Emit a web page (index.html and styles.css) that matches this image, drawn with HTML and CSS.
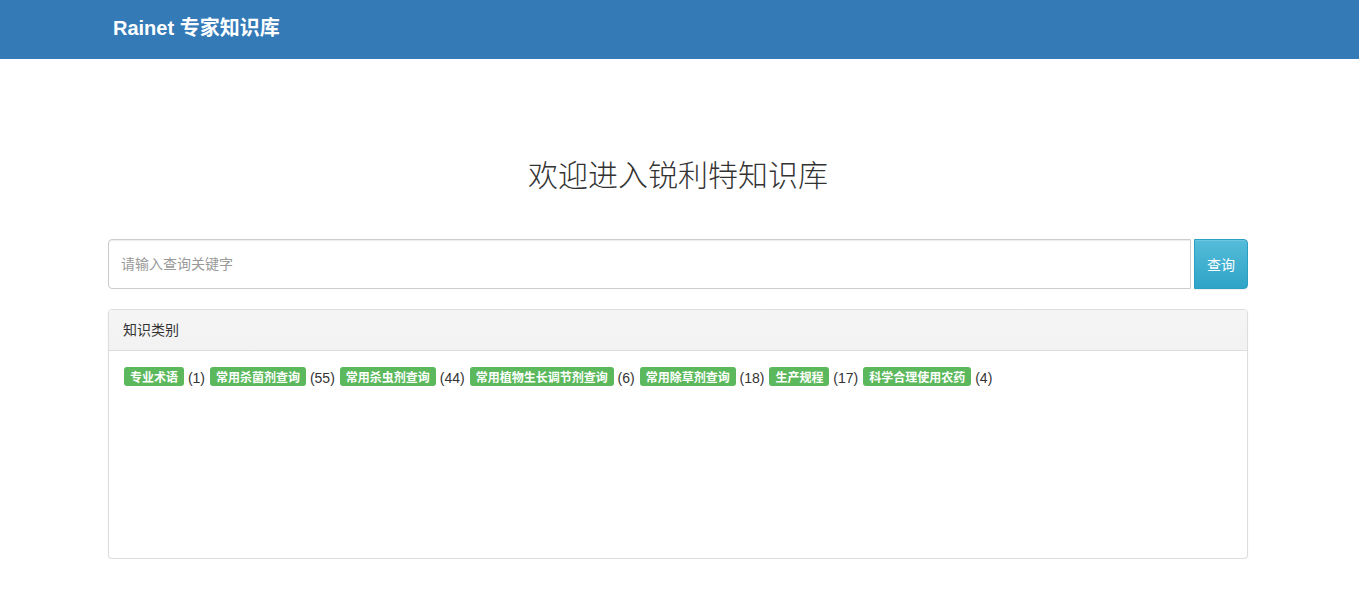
FILE: index.html
```html
<!DOCTYPE html>
<html lang="zh">
<head>
<meta charset="utf-8">
<title>Rainet 专家知识库</title>
<link rel="stylesheet" href="styles.css">
</head>
<body>
<nav class="navbar">
  <div class="container">
    <a class="brand" href="#">Rainet 专家知识库</a>
  </div>
</nav>
<main class="container">
  <h1 class="title">欢迎进入锐利特知识库</h1>
  <form class="search">
    <input class="search-input" type="text" placeholder="请输入查询关键字">
    <button class="search-btn" type="button">查询</button>
  </form>
  <section class="panel">
    <div class="panel-heading">知识类别</div>
    <div class="panel-body">
      <span class="item"><span class="label">专业术语</span> (1)</span>
      <span class="item"><span class="label">常用杀菌剂查询</span> (55)</span>
      <span class="item"><span class="label">常用杀虫剂查询</span> (44)</span>
      <span class="item"><span class="label">常用植物生长调节剂查询</span> (6)</span>
      <span class="item"><span class="label">常用除草剂查询</span> (18)</span>
      <span class="item"><span class="label">生产规程</span> (17)</span>
      <span class="item"><span class="label">科学合理使用农药</span> (4)</span>
    </div>
  </section>
</main>
</body>
</html>
```

FILE: styles.css
```css
* { box-sizing: border-box; }
html, body { margin: 0; padding: 0; }
body {
  font-family: "Liberation Sans", Arial, "Noto Sans CJK SC", sans-serif;
  font-size: 14px;
  line-height: 1.42857;
  color: #333;
  background: #fff;
}
.container {
  width: 1170px;
  margin-left: calc(50% - 586.5px);
  padding: 0 15px;
}
.navbar {
  background: #337ab7;
  height: 59px;
}
.navbar .container {
  display: flex;
  align-items: center;
  height: 59px;
}
.brand {
  color: #fff;
  font-weight: bold;
  font-size: 20px;
  text-decoration: none;
  padding-left: 5px;
  margin-top: -2px;
}
.title {
  margin: 95px 0 0;
  text-align: center;
  font-family: "Noto Sans CJK SC", sans-serif;
  font-weight: 300;
  font-size: 30px;
  line-height: 38px;
  color: #333;
}
.search {
  display: flex;
  margin: 47px 0 0 0;
}
.search-input {
  flex: 1;
  height: 50px;
  border: 1px solid #ccc;
  border-radius: 4px 0 0 4px;
  padding: 0 12px;
  font-family: "Liberation Sans", Arial, "Noto Sans CJK SC", sans-serif;
  font-size: 14px;
  color: #555;
  box-shadow: inset 0 1px 1px rgba(0,0,0,.075);
  outline: none;
}
.search-input::placeholder { color: #999; }
.search-btn {
  width: 54px;
  height: 50px;
  margin-left: 3px;
  border: 1px solid #2a9fc2;
  border-radius: 0 4px 4px 0;
  background: linear-gradient(to bottom, #56bcda 0%, #2ea4c7 100%);
  color: #fff;
  font-family: "Liberation Sans", Arial, "Noto Sans CJK SC", sans-serif;
  font-size: 14px;
  padding: 0;
  box-shadow: inset 0 1px 0 rgba(255,255,255,.15), 0 1px 1px rgba(0,0,0,.075);
}
.panel {
  margin: 20px 0 0 0;
  border: 1px solid #ddd;
  border-radius: 4px;
  box-shadow: 0 1px 2px rgba(0,0,0,.05);
  background: #fff;
}
.panel-heading {
  background: linear-gradient(to bottom, #f5f5f5 0%, #f2f2f2 100%);
  border-bottom: 1px solid #ddd;
  border-radius: 3px 3px 0 0;
  padding: 11px 14px 9px;
  height: 41px;
  color: #333;
}
.panel-body {
  padding: 16px 15px 15px;
  min-height: 207px;
  display: flex;
  flex-wrap: wrap;
  align-content: flex-start;
  column-gap: 5px;
}
.item {
  white-space: pre;
  line-height: 20px;
}
.label {
  display: inline-block;
  background: #5cb85c;
  color: #fff;
  font-family: "Noto Sans CJK SC", sans-serif;
  font-weight: bold;
  font-size: 12px;
  line-height: 13px;
  padding: 3px 6px 3px;
  border-radius: 3px;
  vertical-align: 1px;
}
```
